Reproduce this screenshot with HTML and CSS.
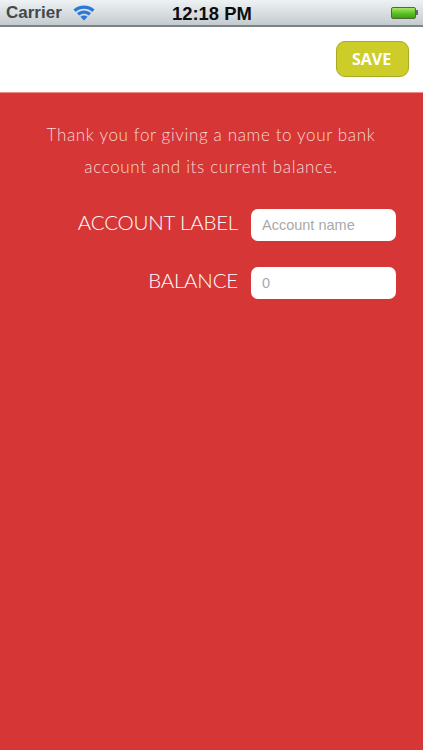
FILE: index.html
```html
<!DOCTYPE html>
<html lang="en">
<head>
  <meta charset="UTF-8">
  <meta name="viewport" content="width=device-width, initial-scale=1.0">
  <title>New account</title>
  <link rel="stylesheet" href="styles.css">
</head>
<body>
  <div class="status">
    <div class="status-left">
      <span class="carrier">Carrier</span>
      <svg class="wifi" width="22" height="17" viewBox="0 0 22 17">
        <path d="M0.5 5.6 C6 0 16 0 21.5 5.6 L19.3 8 C14.6 3.6 7.4 3.6 2.7 8 Z" fill="#2a78d8"/>
        <path d="M4 9.2 C8 5.6 14 5.6 18 9.2 L15.8 11.6 C12.8 9 9.2 9 6.2 11.6 Z" fill="#2a78d8"/>
        <path d="M7.4 12.8 C9.4 11.2 12.6 11.2 14.6 12.8 L11 16.6 Z" fill="#2a78d8"/>
      </svg>
    </div>
    <span class="clock">12:18 PM</span>
    <div class="battery">
      <div class="battery-fill"></div>
      <div class="battery-nub"></div>
    </div>
  </div>
  <header class="nav">
    <button class="save-btn">SAVE</button>
  </header>
  <main class="content">
    <p class="intro">Thank you for giving a name to your bank account and its current balance.</p>
    <div class="row">
      <label class="row-label">ACCOUNT LABEL</label>
      <input class="field" type="text" placeholder="Account name">
    </div>
    <div class="row">
      <label class="row-label">BALANCE</label>
      <input class="field" type="text" placeholder="0">
    </div>
  </main>
</body>
</html>
```
FILE: styles.css
```css
*{
  margin:0;
  padding:0;
  box-sizing:border-box;
}
body{
  width:423px;
  height:750px;
  overflow:hidden;
  display:flex;
  flex-direction:column;
  background-color:#d63736;
  font-family:"Liberation Sans", Arial, sans-serif;
}
.status{
  height:27px;
  padding:0 5px 0 6px;
  display:flex;
  align-items:center;
  justify-content:space-between;
  position:relative;
  background:linear-gradient(#eef2f4, #c4cbd0);
  border-bottom:2px solid #7d8285;
}
.status-left{
  display:flex;
  align-items:center;
  gap:11px;
}
.carrier{
  font-size:17px;
  font-weight:bold;
  color:#44484b;
}
.wifi{
  display:block;
  margin-top:-1px;
}
.clock{
  position:absolute;
  left:172px;
  top:3px;
  font-size:18.4px;
  font-weight:bold;
  color:#0d0d0d;
}
.battery{
  display:flex;
  align-items:center;
}
.battery-fill{
  width:25px;
  height:12px;
  border:1px solid #4f6b3c;
  border-radius:2px;
  background:linear-gradient(#a4e866, #5cc024 55%, #3f9e14);
}
.battery-nub{
  width:2px;
  height:5px;
  background-color:#666b6e;
}
.nav{
  height:66px;
  padding:14px 14px 0 0;
  display:flex;
  justify-content:flex-end;
  align-items:flex-start;
  background-color:#fff;
  border-bottom:1px solid #f08a88;
}
.save-btn{
  width:73px;
  height:36px;
  padding-right:2px;
  border:1px solid #abaa20;
  border-radius:9px;
  background-color:#cdcd2a;
  color:#fff;
  font-family:"Open Sans", sans-serif;
  font-size:16px;
  font-weight:700;
}
.content{
  flex:1;
  padding:0 27px 0 26px;
}
.intro{
  margin:26px 0 26px;
  padding:0 12px;
  text-align:center;
  font-family:Lato, sans-serif;
  font-weight:300;
  font-size:17px;
  line-height:32px;
  letter-spacing:0.65px;
  color:#fbd9d4;
  opacity:0.99;
}
.row{
  display:flex;
  align-items:center;
  justify-content:flex-end;
  gap:13px;
  margin-bottom:26px;
}
.row-label{
  padding-bottom:7px;
  font-family:Lato, sans-serif;
  font-weight:300;
  font-size:20.5px;
  letter-spacing:-0.2px;
  color:#fff;
}
.field{
  width:145px;
  height:32px;
  padding:0 11px;
  border:none;
  border-radius:7px;
  background-color:#fff;
  font-family:"Liberation Sans", Arial, sans-serif;
  font-size:14.5px;
}
.field::placeholder{
  color:#a9a9a9;
  opacity:1;
}
```
